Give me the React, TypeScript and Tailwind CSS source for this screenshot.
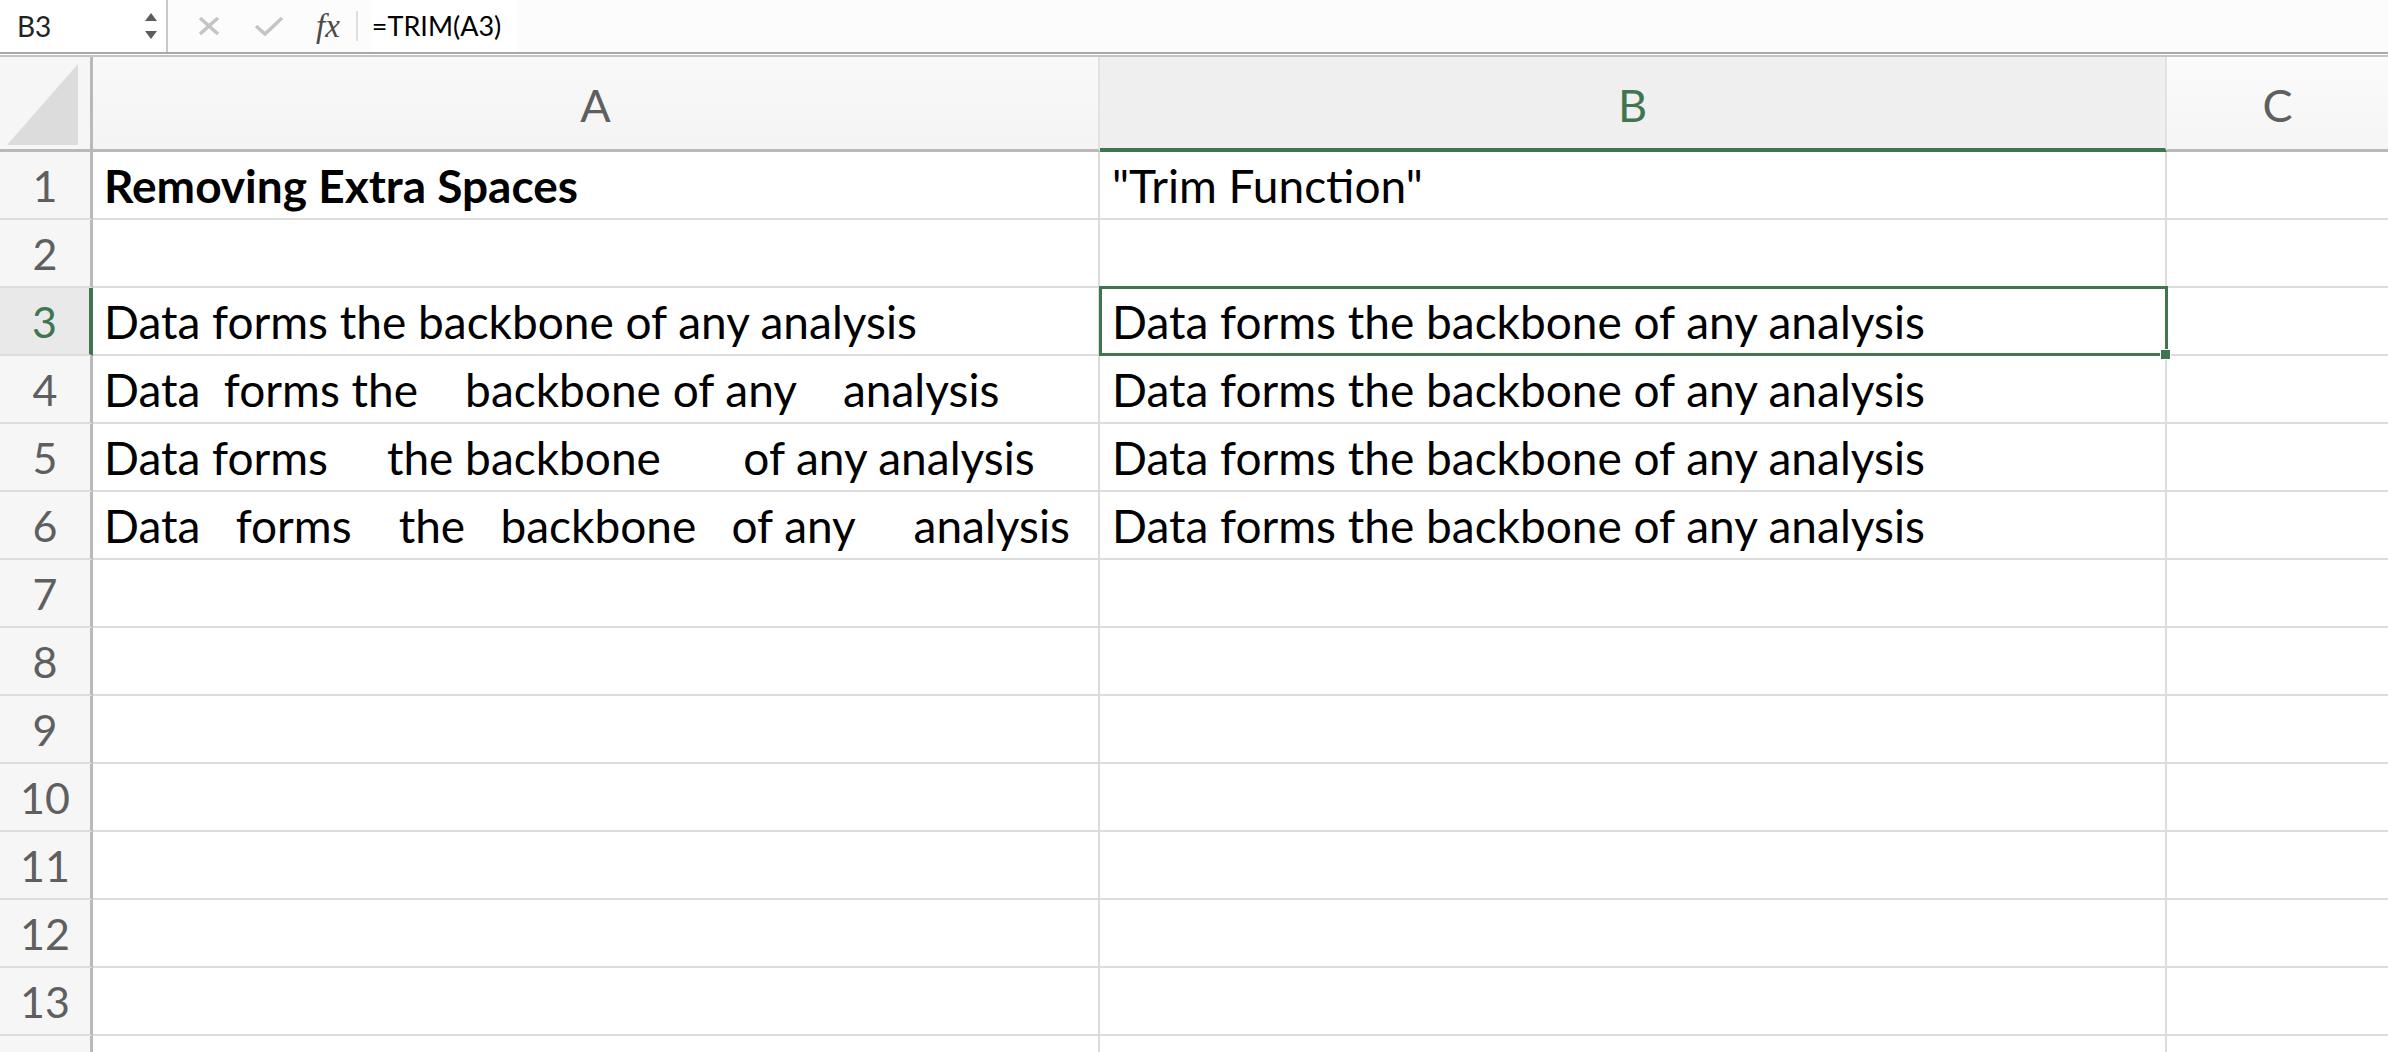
import React from "react";

const rowsA: Record<number, string> = {
  1: "Removing Extra Spaces",
  3: "Data forms the backbone of any analysis",
  4: "Data  forms the    backbone of any    analysis",
  5: "Data forms     the backbone       of any analysis",
  6: "Data   forms    the   backbone   of any     analysis",
};

const rowsB: Record<number, string> = {
  1: "\"Trim Function\"",
  3: "Data forms the backbone of any analysis",
  4: "Data forms the backbone of any analysis",
  5: "Data forms the backbone of any analysis",
  6: "Data forms the backbone of any analysis",
};

function FormulaBar() {
  return (
    <div className="flex h-[52px] items-center bg-[#fcfcfc]">
      {/* Name box */}
      <div className="flex h-full w-[168px] items-center justify-between border-r-2 border-[#c9c9c9] bg-white pl-[17px] pr-[8px]">
        <span className="text-[28px] text-[#222]">B3</span>
        <svg width="14" height="32" viewBox="0 0 14 32">
          <path d="M7 3 L13 11 L1 11 Z" fill="#5c5c5c" />
          <path d="M1 21 L13 21 L7 29 Z" fill="#5c5c5c" />
        </svg>
      </div>
      {/* Cancel / enter / fx */}
      <div className="flex h-full items-center pl-[29px]">
        <svg width="24" height="18" viewBox="0 0 24 18">
          <path d="M3 1 L21 17 M21 1 L3 17" stroke="#c4c4c4" strokeWidth="3.5" />
        </svg>
        <svg className="ml-[33px]" width="30" height="20" viewBox="0 0 30 20">
          <path d="M2 10 L11 18 L28 2" stroke="#c4c4c4" strokeWidth="3.5" fill="none" />
        </svg>
        <span className="ml-[32px] font-['Liberation_Serif',serif] text-[33px] italic leading-none text-[#4a4a4a]">
          fx
        </span>
        <div className="ml-[16px] h-[30px] w-[2px] bg-[#dedede]" />
      </div>
      <div className="ml-[14px] flex h-full items-center bg-white pr-4">
        <span className="text-[27px] text-black">=TRIM(A3)</span>
      </div>
    </div>
  );
}

function Corner() {
  return (
    <div className="relative h-full border-b-[3px] border-r-[3px] border-[#b9b9b9] bg-[#f6f6f6]">
      <svg className="absolute left-[7px] top-[7px]" width="72" height="82" viewBox="0 0 72 82">
        <path d="M71 0 L71 81 L0 81 Z" fill="#dcdcdc" />
      </svg>
    </div>
  );
}

export default function App() {
  const rows = Array.from({ length: 14 }, (_, i) => i + 1);
  return (
    <div className="h-[1052px] w-[2388px] overflow-hidden bg-white font-['Lato',sans-serif]">
      <FormulaBar />
      <div className="h-[5px] border-b-2 border-t-2 border-b-[#c4c4c4] border-t-[#a9a9a9] bg-white" />

      <div className="grid grid-cols-[93px_1007px_1067px_1fr]">
        {/* Column headers */}
        <div className="h-[95px]">
          <Corner />
        </div>
        <div className="flex h-[95px] items-center justify-center border-b-[3px] border-r-2 border-b-[#b9b9b9] border-r-[#e2e2e2] bg-gradient-to-b from-[#f9f9f9] to-[#f4f4f4] pt-[6px] text-[45px] text-[#5f5f5f]">
          A
        </div>
        <div className="flex h-[95px] items-center justify-center border-b-[4px] border-r-2 border-b-[#3f7650] border-r-[#e2e2e2] bg-[#efefef] pt-[6px] text-[45px] text-[#3f7650]">
          B
        </div>
        <div className="flex h-[95px] items-center justify-center border-b-[3px] border-b-[#b9b9b9] bg-gradient-to-b from-[#fbfbfb] to-[#f5f5f5] pt-[6px] text-[45px] text-[#5f5f5f]">
          C
        </div>

        {rows.map((r) => {
          const sel = r === 3;
          return (
            <div key={r} className="contents">
              <div
                className={
                  sel
                    ? "flex h-[68px] items-center justify-center border-b-2 border-r-[4px] border-b-[#dcdcdc] border-r-[#3f7650] bg-[#e9e9e9] pt-[2px] text-[43px] text-[#3f7650]"
                    : "flex h-[68px] items-center justify-center border-b-2 border-r-[3px] border-b-[#dcdcdc] border-r-[#b9b9b9] bg-[#f6f6f6] pt-[2px] text-[43px] text-[#5f5f5f]"
                }
              >
                {r <= 13 ? r : ""}
              </div>
              <div className="flex h-[68px] items-center overflow-hidden border-b-2 border-r-2 border-[#dcdcdc] pl-[11px]">
                <span
                  className={
                    r === 1
                      ? "whitespace-pre text-[46px] font-bold text-black"
                      : "whitespace-pre text-[46px] text-black"
                  }
                >
                  {rowsA[r] ?? ""}
                </span>
              </div>
              <div className="relative flex h-[68px] items-center border-b-2 border-r-2 border-[#dcdcdc] pl-[12px]">
                <span className="whitespace-pre text-[46px] text-black">{rowsB[r] ?? ""}</span>
                {sel && (
                  <>
                    <div className="pointer-events-none absolute -bottom-[2px] -left-[1px] -right-[3px] -top-[2px] z-10 border-[3px] border-[#3f7650]" />
                    <div className="absolute -bottom-[6px] -right-[6px] z-20 h-[11px] w-[11px] border border-white bg-[#3f7650]" />
                  </>
                )}
              </div>
              <div className="h-[68px] border-b-2 border-[#dcdcdc]" />
            </div>
          );
        })}
      </div>
    </div>
  );
}
